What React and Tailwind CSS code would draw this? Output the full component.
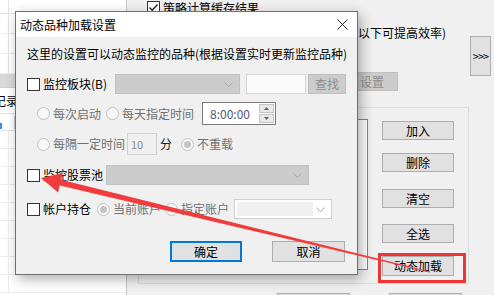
import React from "react";

const FONT = "font-['Noto_Sans_CJK_SC','Noto_Sans',sans-serif]";

function Check({ checked = false }) {
  return (
    <div className="w-[13px] h-[13px] shrink-0 border border-[#333333] bg-white flex items-center justify-center">
      {checked && (
        <svg width="11" height="11" viewBox="0 0 11 11">
          <path d="M1.5 5.5 L4.2 8.2 L9.5 2.5" fill="none" stroke="#222" strokeWidth="1.3" />
        </svg>
      )}
    </div>
  );
}

function Radio({ checked = false }) {
  return (
    <div className="w-[13px] h-[13px] shrink-0 rounded-full border border-[#c2c2c2] bg-[#f7f7f7] flex items-center justify-center">
      {checked && <div className="w-[7px] h-[7px] rounded-full bg-[#c4c4c4]" />}
    </div>
  );
}

function Chevron({ color = "#a8a8a8" }) {
  return (
    <svg width="9" height="5" viewBox="0 0 9 5">
      <path d="M0.5 0.5 L4.5 4.5 L8.5 0.5" fill="none" stroke={color} strokeWidth="1" />
    </svg>
  );
}

function Btn({ children, className = "" }) {
  return (
    <div className={"shrink-0 flex items-center justify-center bg-[#e1e1e1] border border-[#adadad] text-[12px] text-black " + className}>
      {children}
    </div>
  );
}

function Dialog() {
  return (
    <div className="absolute left-[15px] top-[11px] w-[343px] h-[264px] border border-[#707070] bg-[#f0f0f0] flex flex-col shadow-[3px_4px_12px_rgba(0,0,0,0.32)]">
      <div className="h-[25px] shrink-0 bg-white flex items-center justify-between pl-[4px] pr-[9px]">
        <span className="text-[12px] text-black">动态品种加载设置</span>
        <svg width="11" height="11" viewBox="0 0 11 11">
          <path d="M0.5 0.5 L10.5 10.5 M10.5 0.5 L0.5 10.5" stroke="#222" strokeWidth="1" />
        </svg>
      </div>

      <div className="flex-1 flex flex-col pl-[11px] text-[12px]">
        <div className="h-[20px] shrink-0 mt-[7px] flex items-center text-black">
          这里的设置可以动态监控的品种(根据设置实时更新监控品种)
        </div>

        <div className="h-[20px] shrink-0 mt-[10px] flex items-center">
          <div className="w-[88px] flex items-center gap-[3px] text-black">
            <Check />
            <span>监控板块(B)</span>
          </div>
          <div className="w-[125px] h-[20px] bg-[#cccccc] border border-[#c2c2c2] flex items-center justify-end pr-[6px]">
            <Chevron />
          </div>
          <div className="ml-[6px] w-[60px] h-[20px] bg-[#fbfbfb] border border-[#d6d6d6]" />
          <div className="ml-[2px] w-[38px] h-[20px] bg-[#cccccc] border border-[#bfbfbf] flex items-center justify-center text-[#8c8c8c]">
            查找
          </div>
        </div>

        <div className="h-[23px] shrink-0 mt-[8px] flex items-center pl-[10px] text-[#707070]">
          <div className="w-[69px] flex items-center gap-[3px]">
            <Radio />
            <span>每次启动</span>
          </div>
          <div className="w-[96px] flex items-center gap-[3px]">
            <Radio />
            <span>每天指定时间</span>
          </div>
          <div className="w-[74px] h-[23px] bg-white border border-[#7a7a7a] flex items-center justify-between pl-[7px] pr-[1px]">
            <span className="text-[12px] text-[#55557a]">8:00:00</span>
            <div className="flex flex-col gap-[1px]">
              <div className="w-[15px] h-[9px] bg-[#e8e8e8] border border-[#c4c4c4] flex items-center justify-center">
                <svg width="5" height="3" viewBox="0 0 5 3"><path d="M0 3 L2.5 0 L5 3 Z" fill="#606060" /></svg>
              </div>
              <div className="w-[15px] h-[9px] bg-[#e8e8e8] border border-[#c4c4c4] flex items-center justify-center">
                <svg width="5" height="3" viewBox="0 0 5 3"><path d="M0 0 L2.5 3 L5 0 Z" fill="#606060" /></svg>
              </div>
            </div>
          </div>
        </div>

        <div className="h-[22px] shrink-0 mt-[8px] flex items-center pl-[10px] text-[#707070]">
          <div className="w-[90px] flex items-center gap-[3px]">
            <Radio />
            <span>每隔一定时间</span>
          </div>
          <div className="w-[30px] h-[22px] bg-[#f0f0f0] border border-[#d0d0d0] flex items-center pl-[3px] text-[11px] text-[#8a8a8a]">
            10
          </div>
          <span className="ml-[3px] text-[#222]">分</span>
          <div className="ml-[9px] flex items-center gap-[3px]">
            <Radio checked />
            <span>不重载</span>
          </div>
        </div>

        <div className="h-[20px] shrink-0 mt-[10px] flex items-center">
          <div className="w-[79px] flex items-center gap-[3px] text-black">
            <Check />
            <span>监控股票池</span>
          </div>
          <div className="w-[203px] h-[20px] bg-[#cccccc] border border-[#c2c2c2] flex items-center justify-end pr-[6px]">
            <Chevron />
          </div>
        </div>

        <div className="h-[20px] shrink-0 mt-[14px] flex items-center">
          <div className="w-[70px] flex items-center gap-[3px] text-black">
            <Check />
            <span>帐户持仓</span>
          </div>
          <div className="w-[68px] flex items-center gap-[3px] text-[#707070]">
            <Radio checked />
            <span>当前账户</span>
          </div>
          <div className="w-[69px] flex items-center gap-[3px] text-[#707070]">
            <Radio />
            <span>指定账户</span>
          </div>
          <div className="w-[98px] h-[20px] bg-white border border-[#cfcfcf] flex items-center pl-[2px] pr-[6px] justify-between">
            <div className="w-[76px] h-[14px] bg-[#f0f0f0]" />
            <Chevron />
          </div>
        </div>

        <div className="h-[21px] shrink-0 mt-[22px] flex items-center pl-[143px] gap-[30px]">
          <Btn className="w-[72px] h-[21px] !border-2 !border-[#0078d7]">确定</Btn>
          <Btn className="w-[73px] h-[21px]">取消</Btn>
        </div>
      </div>
    </div>
  );
}

function LeftPane() {
  const rows = Array.from({ length: 9 });
  return (
    <div className="w-[127px] shrink-0 bg-white border-r border-[#c8c8c8] flex flex-col overflow-hidden">
      <div className="h-[14px] shrink-0 flex border-b border-[#e3e3e3]"><div className="w-[9px] border-r border-[#e3e3e3]" /></div>
      {[0, 1, 2].map((i) => (
        <div key={i} className="h-[20px] shrink-0 flex border-b border-[#ececec]"><div className="w-[9px] border-r border-[#e3e3e3]" /></div>
      ))}
      <div className="h-[13px] shrink-0 bg-[#d9d9d9]" />
      <div className="h-[27px] shrink-0 flex items-center border-t border-[#cfcfcf] border-b border-b-[#e3e3e3] text-[12px] text-black">
        <span className="-ml-[6px]">记录</span>
      </div>
      <div className="h-[17px] shrink-0 flex items-end border-b border-[#e3e3e3]">
        <div className="w-[2px] h-[6px] bg-[#3a8ee6] mb-[1px]" />
        <div className="ml-[12px] w-[1px] h-[13px] bg-[#c8c8c8] mb-[1px]" />
      </div>
      {rows.map((_, i) => (
        <div key={i} className="h-[18px] shrink-0 flex border-b border-[#ececec]"><div className="w-[9px] border-r border-[#ececec]" /></div>
      ))}
    </div>
  );
}

function RightPane() {
  return (
    <div className="flex-1 flex flex-col text-[12px]">
      <div className="h-[24px] shrink-0 pl-[20px] pt-[1px] flex items-start gap-[3px] text-black">
        <Check checked />
        <span className="leading-[13px]">策略计算缓存结果</span>
      </div>

      <div className="h-[83px] shrink-0 flex">
        <div className="flex-1 flex flex-col">
          <div className="h-[18px] shrink-0 pl-[231px] flex items-center text-black whitespace-nowrap">以下可提高效率)</div>
          <div className="mt-[30px] pl-[203px]">
            <div className="w-[68px] h-[19px] bg-[#cccccc] border border-[#bfbfbf] flex items-center justify-center pl-[16px] text-[#8c8c8c]">
              设置
            </div>
          </div>
        </div>
        <div className="w-[21px] h-[40px] mt-[12px] mr-[3px] bg-[#e1e1e1] border border-[#adadad] flex items-center justify-center text-[11px] text-black tracking-[-1px]">
          &gt;&gt;&gt;
        </div>
      </div>

      <div className="ml-[11px] w-[331px] h-[177px] shrink-0 border border-[#dcdcdc] flex">
        <div className="ml-[10px] mt-[11px] w-[219px] h-[151px] border border-[#828790] bg-white" />
        <div className="ml-[14px] flex flex-col">
          <Btn className="mt-[13px] w-[72px] h-[19px]">加入</Btn>
          <Btn className="mt-[13px] w-[72px] h-[19px]">删除</Btn>
          <Btn className="mt-[17px] w-[72px] h-[19px]">清空</Btn>
          <Btn className="mt-[16px] w-[72px] h-[19px]">全选</Btn>
          <Btn className="mt-[13px] w-[72px] h-[20px]">动态加载</Btn>
        </div>
      </div>

      {/* next row of buttons, only their top edges fall inside the shot */}
      <div className="mt-[9px] shrink-0 pl-[150px] flex gap-[39px]">
        <Btn className="w-[73px] h-[20px]" />
        <Btn className="w-[73px] h-[20px]" />
      </div>
    </div>
  );
}

export default function App() {
  return (
    <div className={"relative w-[494px] h-[295px] overflow-hidden bg-[#f0f0f0] flex leading-none " + FONT}>
      <LeftPane />
      <RightPane />
      <Dialog />

      {/* annotation: red box + arrow */}
      <div className="absolute left-[378px] top-[253px] w-[88px] h-[30px] border-[3px] border-[#ee3535]" />
      <svg className="absolute left-0 top-0 pointer-events-none" width="494" height="295" viewBox="0 0 494 295">
        <polygon
          points="41,178 62.8,173 61.1,179.8 429.9,271.5 430.1,272.5 59.7,185.6 58.1,192.4"
          fill="#f03c3c"
        />
      </svg>
    </div>
  );
}
